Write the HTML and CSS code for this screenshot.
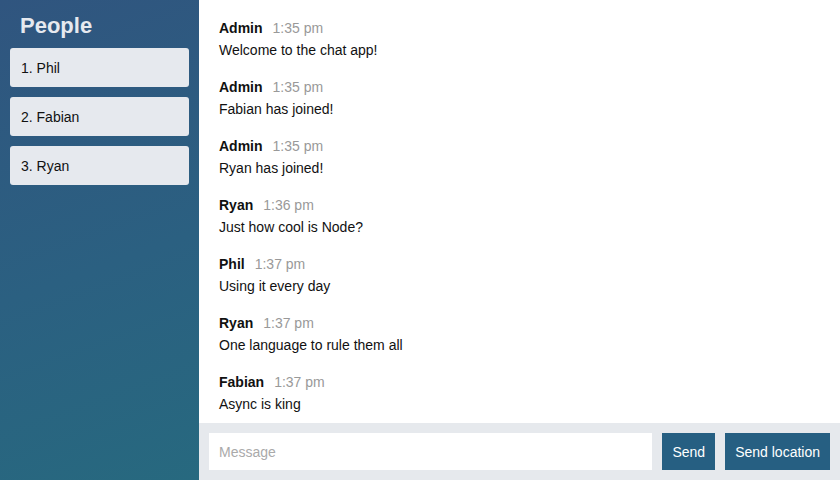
FILE: index.html
```html
<!DOCTYPE html>
<html>
<head>
<meta charset="utf-8">
<link rel="stylesheet" href="styles.css">
</head>
<body>
<div class="chat">
  <aside class="sidebar">
    <h2 class="sidebar-title">People</h2>
    <ol class="people">
      <li class="person">1. Phil</li>
      <li class="person">2. Fabian</li>
      <li class="person">3. Ryan</li>
    </ol>
  </aside>
  <main class="main">
    <div class="messages">
      <div class="message">
        <p class="meta"><span class="name">Admin</span><span class="time">1:35 pm</span></p>
        <p class="text">Welcome to the chat app!</p>
      </div>
      <div class="message">
        <p class="meta"><span class="name">Admin</span><span class="time">1:35 pm</span></p>
        <p class="text">Fabian has joined!</p>
      </div>
      <div class="message">
        <p class="meta"><span class="name">Admin</span><span class="time">1:35 pm</span></p>
        <p class="text">Ryan has joined!</p>
      </div>
      <div class="message">
        <p class="meta"><span class="name">Ryan</span><span class="time">1:36 pm</span></p>
        <p class="text">Just how cool is Node?</p>
      </div>
      <div class="message">
        <p class="meta"><span class="name">Phil</span><span class="time">1:37 pm</span></p>
        <p class="text">Using it every day</p>
      </div>
      <div class="message">
        <p class="meta"><span class="name">Ryan</span><span class="time">1:37 pm</span></p>
        <p class="text">One language to rule them all</p>
      </div>
      <div class="message">
        <p class="meta"><span class="name">Fabian</span><span class="time">1:37 pm</span></p>
        <p class="text">Async is king</p>
      </div>
    </div>
    <div class="compose">
      <form class="compose-form">
        <input class="compose-input" type="text" placeholder="Message">
        <button class="btn" type="button">Send</button>
      </form>
      <button class="btn" type="button">Send location</button>
    </div>
  </main>
</div>
</body>
</html>
```
FILE: styles.css
```css
* { box-sizing: border-box; }
html, body {
  margin: 0;
  padding: 0;
  height: 100%;
}
body {
  font-family: "Liberation Sans", Arial, sans-serif;
  font-size: 14px;
  color: #111;
}
.chat {
  display: flex;
  height: 100vh;
}
.sidebar {
  width: 199px;
  flex-shrink: 0;
  background: linear-gradient(160deg, #30557f 0%, #2b6081 55%, #27697f 100%);
  padding: 12px 10px 0 10px;
}
.sidebar-title {
  margin: 0 0 8px 10px;
  font-size: 22px;
  line-height: 28px;
  font-weight: 700;
  color: #e6e9ef;
}
.people {
  list-style: none;
  margin: 0;
  padding: 0;
  display: flex;
  flex-direction: column;
  gap: 10px;
}
.person {
  background: #e6e9ee;
  border-radius: 3px;
  height: 39px;
  padding: 0 11px;
  display: flex;
  align-items: center;
  font-size: 14px;
  color: #111;
}
.main {
  flex: 1;
  display: flex;
  flex-direction: column;
  min-width: 0;
}
.messages {
  flex: 1;
  overflow: hidden;
  padding: 18px 20px 0 20px;
}
.message {
  margin-bottom: 17px;
}
.meta {
  margin: 0 0 2px 0;
  line-height: 20px;
}
.name {
  font-weight: 700;
  margin-right: 10px;
}
.time {
  color: #999;
}
.text {
  margin: 0;
  line-height: 20px;
}
.compose {
  flex-shrink: 0;
  height: 57px;
  background: #e6e9ed;
  padding: 10px;
  display: flex;
  gap: 10px;
}
.compose-form {
  flex: 1;
  display: flex;
  gap: 10px;
  margin: 0;
}
.compose-input {
  flex: 1;
  border: none;
  outline: none;
  background: #fff;
  padding: 0 10px;
  font-family: "Liberation Sans", Arial, sans-serif;
  font-size: 14px;
  height: 37px;
}
.compose-input::placeholder {
  color: #aaa;
}
.btn {
  border: none;
  background: #265f82;
  color: #fff;
  font-family: "Liberation Sans", Arial, sans-serif;
  font-size: 14px;
  height: 37px;
  padding: 0 10px;
  cursor: pointer;
}
```
